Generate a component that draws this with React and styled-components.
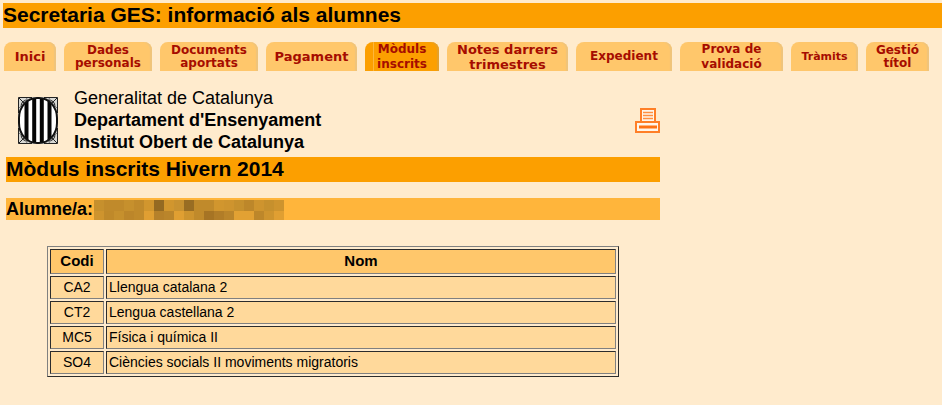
import React from 'react';
import styled, { createGlobalStyle } from 'styled-components';

const tabs = [
    { lines: ['Inici'], width: 52, size: 13 },
    { lines: ['Dades', 'personals'], width: 88, size: 12 },
    { lines: ['Documents', 'aportats'], width: 98, size: 12 },
    { lines: ['Pagament'], width: 91, size: 13 },
    { lines: ['Mòduls', 'inscrits'], width: 74, size: 12, loose: true, active: true },
    { lines: ['Notes darrers', 'trimestres'], width: 121, size: 13, loose: true },
    { lines: ['Expedient'], width: 96, size: 12 },
    { lines: ['Prova de', 'validació'], width: 103, size: 12, loose: true },
    { lines: ['Tràmits'], width: 67, size: 11 },
    { lines: ['Gestió', 'títol'], width: 63, size: 12 },
]

const moduls = [
    ['CA2', 'Llengua catalana 2'],
    ['CT2', 'Lengua castellana 2'],
    ['MC5', 'Física i química II'],
    ['SO4', 'Ciències socials II moviments migratoris'],
]

// two rows of blocks hiding the student's name
const mosaic = [
    ['#c6902d', '#c08a2b', '#c08a2b', '#c6902d', '#c08a2b', '#d1962e', '#946a22', '#d1962e', '#c99230', '#996d23', '#c08a2b', '#c08a2b', '#d1962e', '#ce942e', '#c6902d', '#bd872a', '#ce942e', '#c6902d', '#ce942e'],
    ['#ce942e', '#bf892a', '#c6902d', '#bc862a', '#c08a2b', '#e09f32', '#b6812a', '#ba852b', '#e09f32', '#ce942e', '#c08a2b', '#a67424', '#b17d28', '#ba852b', '#e2a133', '#e2a133', '#bd872a', '#ce942e', '#e09f32'],
]

function Shield() {
    return (
        <ShieldIcon viewBox="0 0 40 47" aria-hidden="true">
            <rect width="40" height="47" fill="#d8d8d4"/>
            <g fill="none" stroke="#222" strokeWidth="1">
                <path d="M.5 16V.5H14M39.500 16V.5H26M.5 31V46.500H14M39.500 31V46.500H26"/>
                <path d="M1 1L10 10M39 1L30 10M1 46L10 37M39 46L30 37"/>
                <path d="M3 10Q3 3 10 3M37 10Q37 3 30 3M3 37Q3 44 10 44M37 37Q37 44 30 44"/>
                <path d="M1 11Q6 8 9 1M39 11Q34 8 31 1M1 36Q6 39 9 46M39 36Q34 39 31 46" stroke="#777"/>
            </g>
            <clipPath id="oval">
                <rect x="1" y="1" width="38" height="45" rx="18" ry="20"/>
            </clipPath>
            <g clipPath="url(#oval)">
                <rect width="40" height="47" fill="#fff"/>
                <path d="M8.500 0V47M16.200 0V47M23.800 0V47M31.500 0V47" stroke="#050505" strokeWidth="4"/>
            </g>
            <rect x="1" y="1" width="38" height="45" rx="18" ry="20" fill="none" stroke="#111" strokeWidth="2"/>
        </ShieldIcon>
    )
}

function Printer() {
    return (
        <PrinterIcon viewBox="0 0 25 25" aria-hidden="true">
            <rect x="6" y="1" width="14" height="13" fill="#fff6ea" stroke="#ff7f27" strokeWidth="2"/>
            <path d="M8 4.500H18M8 7.500H18M8 10.500H18" stroke="#ff8f40" strokeWidth="1.500"/>
            <rect x="1" y="14" width="23" height="10" fill="#fff6ea" stroke="#ff7f27" strokeWidth="2"/>
            <path d="M4 19H22" stroke="#ff7314" strokeWidth="3"/>
        </PrinterIcon>
    )
}

function App() {
    return (
        <Page>
            <GlobalStyle/>
            <SiteTitle>Secretaria GES: informació als alumnes</SiteTitle>
            <Nav>
                {tabs.map(({ lines, width, size, loose, active }) => (
                    <Tab href="#" key={lines[0]} $width={width} $size={size} $loose={loose} $active={active}>
                        {lines.map(line => <span key={line}>{line}</span>)}
                    </Tab>
                ))}
            </Nav>
            <Content>
                <Header>
                    <Shield/>
                    <Organisation>
                        <span>Generalitat de Catalunya</span>
                        <strong>Departament d'Ensenyament</strong>
                        <strong>Institut Obert de Catalunya</strong>
                    </Organisation>
                    <PrintButton type="button" aria-label="Imprimeix">
                        <Printer/>
                    </PrintButton>
                </Header>
                <SectionTitle>Mòduls inscrits Hivern 2014</SectionTitle>
                <Student>
                    Alumne/a:
                    <Mosaic viewBox="0 0 190 20" aria-hidden="true">
                        {mosaic.map((row, y) => row.map((color, x) => (
                            <rect key={`${x}-${y}`} x={x * 10} y={y * 11} width="10" height={11 - y * 2} fill={color}/>
                        )))}
                    </Mosaic>
                </Student>
                <Table>
                    <thead>
                        <tr>
                            <HeadCell $narrow>Codi</HeadCell>
                            <HeadCell>Nom</HeadCell>
                        </tr>
                    </thead>
                    <tbody>
                        {moduls.map(([codi, nom]) => (
                            <tr key={codi}>
                                <Cell $center>{codi}</Cell>
                                <Cell>{nom}</Cell>
                            </tr>
                        ))}
                    </tbody>
                </Table>
            </Content>
        </Page>
    )
}

export default App

////////////////////////////////////////////// STYLES ///////////////////////////////////////////

const GlobalStyle = createGlobalStyle`
    body{
        margin:0;
        background:#ffebcd;
        color:#000;
        font-family:"Liberation Sans", Arial, sans-serif;
    }
`

const Page = styled.div`
    padding-top:3px;
`

const SiteTitle = styled.h1`
    margin:0 0 0 3px;
    padding-bottom:2px;
    background:#fc9f00;
    font-size:21px;
    line-height:23px;
`

const Nav = styled.nav`
    display:flex;
    gap:8px;
    margin:14px 4px 0;
`

const Tab = styled.a`
    box-sizing:border-box;
    flex:none;
    display:flex;
    flex-direction:column;
    align-items:center;
    justify-content:center;
    width:${props => props.$width}px;
    height:29px;
    border-radius:8px 8px 0 0;
    background:${props => props.$active
        ? 'linear-gradient(90deg, #fc9f00 8px, #fdb63c 8px, #fdb63c 9px, #fc9f00 9px)'
        : '#ffc76b'};
    box-shadow:inset -2px 0 1px ${props => props.$active ? '#e3a02c' : '#efc47c'};
    color:#a60c00;
    font-family:"DejaVu Sans", Verdana, sans-serif;
    font-size:${props => props.$size}px;
    font-weight:bold;
    line-height:${props => props.$loose ? 15 : 13}px;
    text-decoration:none;
    white-space:nowrap;
`

const Content = styled.main`
    max-width:654px;
    margin:0 6px;
`

const Header = styled.header`
    display:flex;
    align-items:center;
    padding:16px 0 4px 12px;
`

const ShieldIcon = styled.svg`
    width:40px;
    height:47px;
    margin-right:16px;
`

const Organisation = styled.div`
    display:flex;
    flex-direction:column;
    flex:1;
    font-size:18px;
    line-height:22px;
`

const PrintButton = styled.button`
    padding:0;
    border:none;
    background:none;
    cursor:pointer;
`

const PrinterIcon = styled.svg`
    display:block;
    width:25px;
    height:25px;
`

const SectionTitle = styled.h2`
    margin:0;
    padding-bottom:2px;
    background:#fc9f00;
    font-size:21px;
    line-height:23px;
`

const Student = styled.div`
    display:flex;
    align-items:flex-end;
    margin-top:16px;
    background:#ffb53b;
    font-size:18px;
    font-weight:bold;
    line-height:22px;
`

const Mosaic = styled.svg`
    width:190px;
    height:20px;
    margin-left:1px;
`

const Table = styled.table`
    width:calc(100% - 82px);
    margin:26px auto 0;
    border:1px solid;
    border-color:#808080 #2c2c2c #2c2c2c #808080;
    border-spacing:2px;
    font-size:14px;
    line-height:17px;
`

const HeadCell = styled.th`
    box-sizing:border-box;
    width:${props => props.$narrow ? '54px' : 'auto'};
    height:25px;
    padding:1px 2px 3px;
    border:1px solid;
    border-color:#2c2c2c #808080 #808080 #2c2c2c;
    background:#ffc76b;
    font-size:15px;
`

const Cell = styled.td`
    padding:2px;
    border:1px solid;
    border-color:#2c2c2c #808080 #808080 #2c2c2c;
    background:#ffd99b;
    text-align:${props => props.$center ? 'center' : 'left'};
`
